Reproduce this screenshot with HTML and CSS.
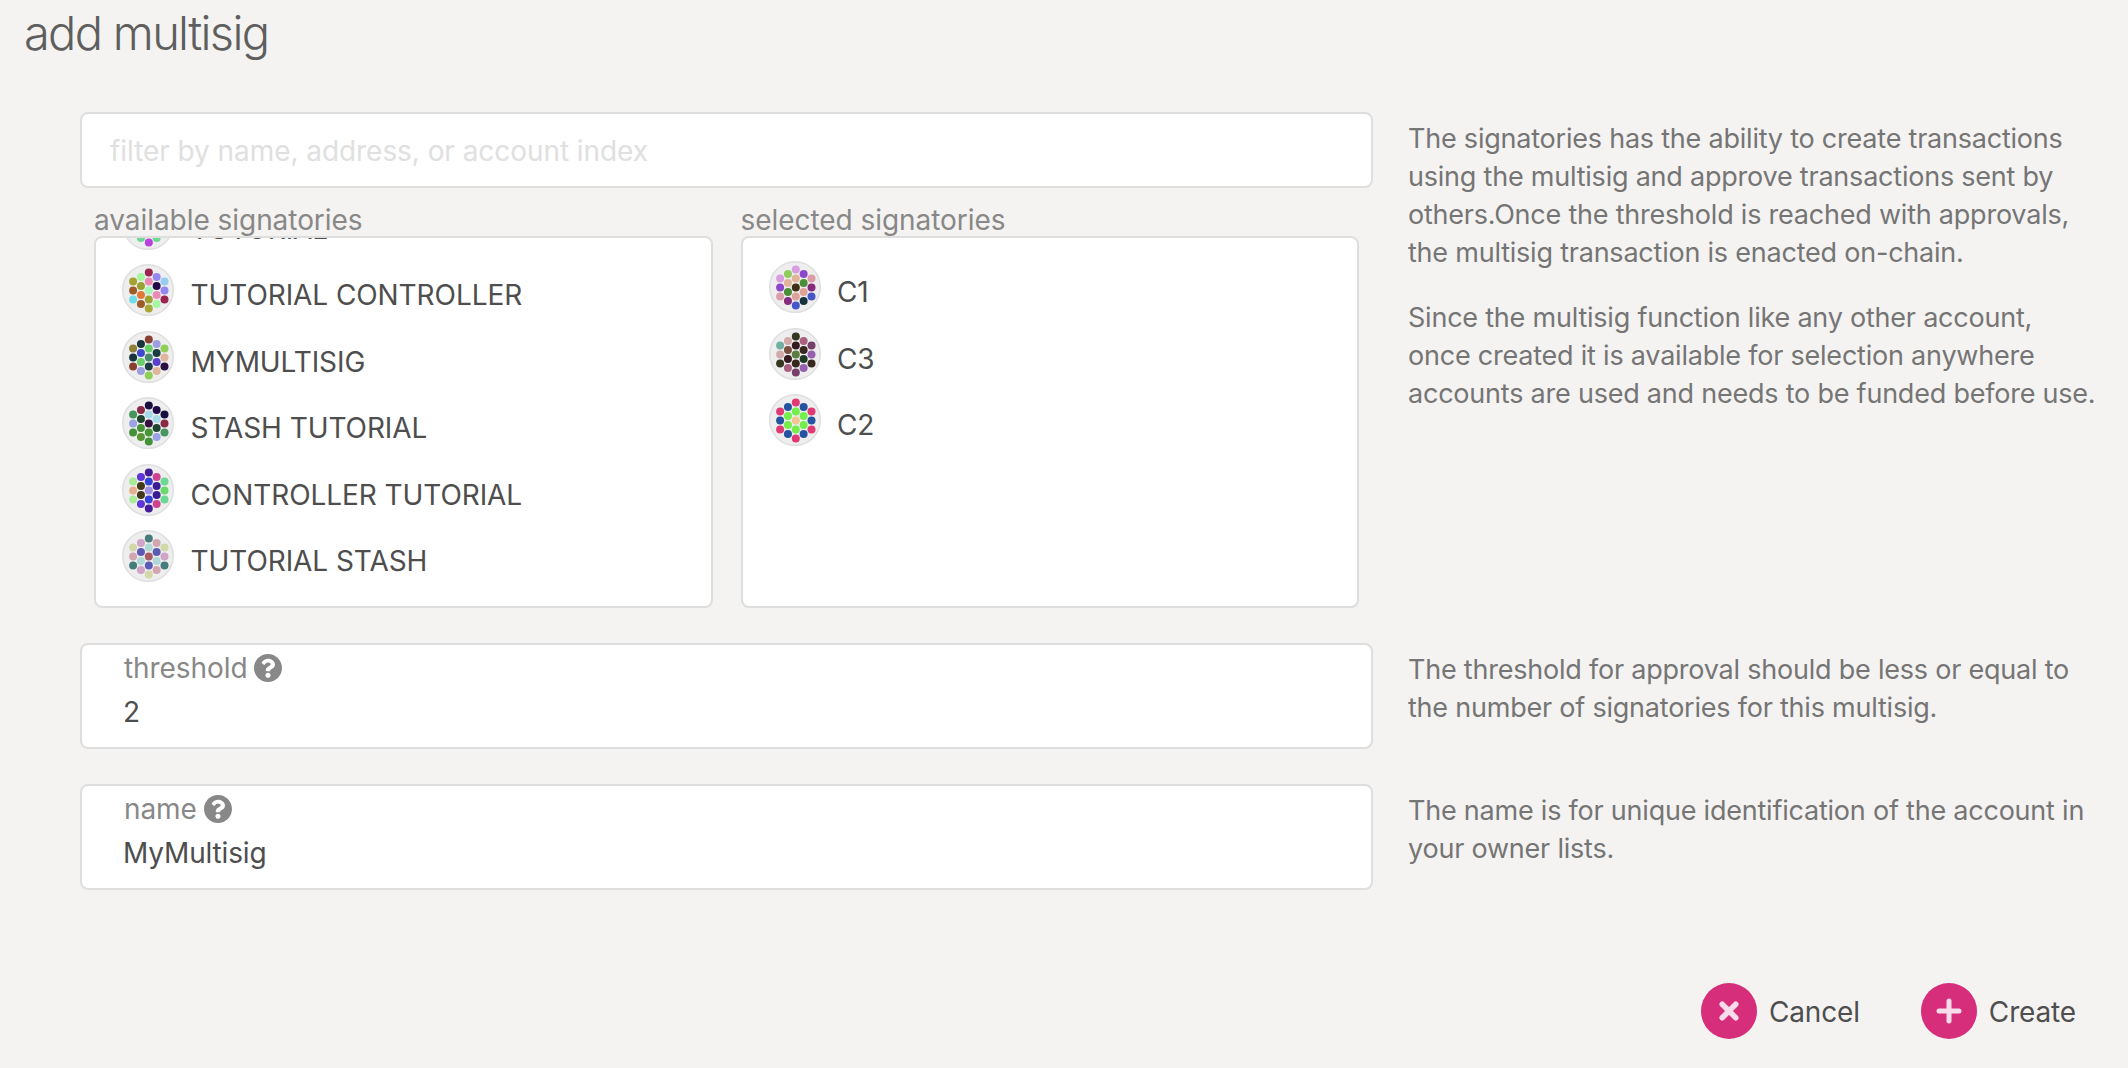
FILE: index.html
```html
<!DOCTYPE html>
<html lang="en">
<head>
<meta charset="utf-8">
<title>add multisig</title>
<link rel="stylesheet" href="styles.css">
</head>
<body>
<main class="modal">
  <h1 class="title">add multisig</h1>
  <section class="row">
    <div class="fields">
      <div class="filter">filter by name, address, or account index</div>
      <div class="lists">
        <div class="column">
          <div class="label">available signatories</div>
          <div class="list list-scrolled">
            <div class="account"><svg class="identicon" data-colors="6bd995 e6b090 6bd995 a9eb9b 3442d8 cf428f 6bd995 b940dc 5f35d8 a9eb9b 3442d8 b940dc a9eb9b 3442d8 cf428f 6bd995 6bd995 e6b090 6bd995"></svg><span>TUTORIAL</span></div>
            <div class="account"><svg class="identicon" data-colors="a5a233 a05c28 6fdcea a4f79f 98a233 e37838 a05c28 9c2450 ea8bb5 a4f6b8 9ea233 a9a63a 9488f0 230847 ea8bb5 a4f79f 96ccf2 9488f0 9c2450"></svg><span>TUTORIAL CONTROLLER</span></div>
            <div class="account"><svg class="identicon" data-colors="8f8138 18343c 8a4030 18343c 4148d0 68cf6b 9d9fe0 8a4030 68cf6b 468c6a 1b3c40 8fcf58 9d9fe0 1b3c40 5a40cc e0b59d 8fcf58 e0b59d 2a1040"></svg><span>MYMULTISIG</span></div>
            <div class="account"><svg class="identicon" data-colors="46965f 9aa3e6 45913a 8a2a46 1d4530 45913a 5a9634 190e40 a5dbe9 36103f 479535 45913a 1e0b48 a5dbe9 1d4530 9aa3e6 190e40 8a2a46 46965f"></svg><span>STASH TUTORIAL</span></div>
            <div class="account"><svg class="identicon" data-colors="a9eb9b e6b090 a9eb9b 5f35d8 44381a 44381a 5f35d8 461b96 3442d8 9d90e6 3442d8 461b96 cf428f 3b1b96 3b1b96 cf428f 6bd995 69da69 6bd995"></svg><span>CONTROLLER TUTORIAL</span></div>
            <div class="account"><svg class="identicon" data-colors="d2d8aa d2a6b0 467c7b d0a5c8 5d5ab5 b0d8d6 d0a5c8 467c7b b0d8d6 a95c63 5d5ab5 d2d8aa d2a6b0 5d5ab5 b0d8d6 d2a6b0 d2d8aa d0a5c8 467c7b"></svg><span>TUTORIAL STASH</span></div>
          </div>
        </div>
        <div class="column">
          <div class="label">selected signatories</div>
          <div class="list">
            <div class="account"><svg class="identicon" data-colors="d99ee0 8c46cc dc9caa 90cc5c e0b59a 4c8e38 872c7c d99ee0 e0b59a 402e16 dfa298 4658c8 8c46cc 4c8e38 dfa298 18323c dc9caa 872c7c 4658c8"></svg><span>C1</span></div>
            <div class="account"><svg class="identicon" data-colors="72b0a4 d2aaaa 33381e d2aaaa 7a5040 341b1e a9617f 33381e 341b1e 5b7f42 38271c 774068 a9617f 38271c 1f3828 9561ae 774068 9561ae 38271c"></svg><span>C3</span></div>
            <div class="account"><svg class="identicon" data-colors="de3a74 2454a0 de3a74 2454a0 74ee4c 74ee4c 2454a0 de3a74 74ee4c f2c694 74ee4c de3a74 2454a0 74ee4c 74ee4c 2454a0 de3a74 2454a0 de3a74"></svg><span>C2</span></div>
          </div>
        </div>
      </div>
    </div>
    <div class="help">
      <p>The signatories has the ability to create transactions<br>using the multisig and approve transactions sent by<br>others.Once the threshold is reached with approvals,<br>the multisig transaction is enacted on-chain.</p>
      <p>Since the multisig function like any other account,<br>once created it is available for selection anywhere<br>accounts are used and needs to be funded before use.</p>
    </div>
  </section>
  <section class="row">
    <div class="input">
      <div class="input-label">threshold<svg class="hint" viewBox="8 8 496 496"><path d="M504 256c0 137-111 248-248 248S8 393 8 256 119 8 256 8s248 111 248 248zM262.700 90c-54.500 0-89.300 23-116.500 63.800-3.500 5.300-2.400 12.400 2.700 16.300l34.700 26.300c5.200 3.900 12.600 3 16.700-2.100 17.900-22.700 30.100-35.800 57.300-35.800 20.400 0 45.700 13.100 45.700 33 0 15-12.400 22.700-32.500 34C247.100 238.500 216 254.900 216 296v4c0 6.600 5.400 12 12 12h56c6.600 0 12-5.400 12-12v-1.300c0-28.500 83.200-29.600 83.200-106.700 0-58-60.200-102-116.500-102zM256 338c-25.400 0-46 20.600-46 46s20.600 46 46 46 46-20.600 46-46-20.600-46-46-46z"/></svg></div>
      <div class="input-value">2</div>
    </div>
    <div class="help help-short">
      <p>The threshold for approval should be less or equal to<br>the number of signatories for this multisig.</p>
    </div>
  </section>
  <section class="row">
    <div class="input">
      <div class="input-label">name<svg class="hint" viewBox="8 8 496 496"><path d="M504 256c0 137-111 248-248 248S8 393 8 256 119 8 256 8s248 111 248 248zM262.700 90c-54.500 0-89.300 23-116.500 63.800-3.500 5.300-2.400 12.400 2.700 16.300l34.700 26.300c5.200 3.900 12.600 3 16.700-2.100 17.900-22.700 30.100-35.800 57.300-35.800 20.400 0 45.700 13.100 45.700 33 0 15-12.400 22.700-32.500 34C247.100 238.500 216 254.900 216 296v4c0 6.600 5.400 12 12 12h56c6.600 0 12-5.400 12-12v-1.300c0-28.500 83.200-29.600 83.200-106.700 0-58-60.200-102-116.500-102zM256 338c-25.400 0-46 20.600-46 46s20.600 46 46 46 46-20.600 46-46-20.600-46-46-46z"/></svg></div>
      <div class="input-value">MyMultisig</div>
    </div>
    <div class="help help-short">
      <p>The name is for unique identification of the account in<br>your owner lists.</p>
    </div>
  </section>
  <footer class="actions">
    <button class="action"><svg class="badge" viewBox="0 0 56 56"><circle cx="28" cy="28" r="28"/><path class="cross" d="M21.200 21.200l13.600 13.600M34.800 21.200L21.200 34.800"/></svg><span>Cancel</span></button>
    <button class="action"><svg class="badge" viewBox="0 0 56 56"><circle cx="28" cy="28" r="28"/><path class="plus" d="M28 18v20M18 28h20"/></svg><span>Create</span></button>
  </footer>
</main>
<script src="script.js"></script>
</body>
</html>
```
FILE: styles.css
```css
* { box-sizing: border-box; }

body {
  margin: 0;
  background: #f4f3f1;
  color: #4e4e4e;
  font-family: Inter, "Liberation Sans", sans-serif;
  font-size: 28px;
  line-height: 38px;
}

.modal {
  height: 1068px;
  overflow: hidden;
  padding: 3px 34px 0 80px;
}

.title {
  margin: 0 0 49px -56px;
  font-size: 47px;
  line-height: 60px;
  font-weight: 300;
  letter-spacing: -1.700px;
  color: #5e5e5e;
}

.row {
  display: grid;
  grid-template-columns: 1293px 1fr;
  column-gap: 35px;
  margin-bottom: 35px;
}

.filter,
.input,
.list {
  background: #fff;
  border: 2px solid #dededf;
  border-radius: 8px;
}

.filter {
  height: 76px;
  padding: 18px 28px;
  letter-spacing: -0.060px;
  color: #e0e0e0;
}

.lists {
  display: flex;
  gap: 28px;
  padding: 13px 14px 0;
}

.column { flex: 1; }

.label {
  height: 35px;
  letter-spacing: -0.050px;
  color: #888;
}

.list {
  height: 372px;
  overflow: hidden;
  padding: 16px 26px;
}

.list-scrolled {
  display: flex;
  flex-direction: column;
  justify-content: flex-end;
  padding-bottom: 16.500px;
}

.account {
  display: flex;
  flex: none;
  align-items: center;
  gap: 16.500px;
  height: 66.500px;
  letter-spacing: -0.080px;
}

.account span { padding-top: 10px; }

.identicon {
  width: 52px;
  height: 52px;
}

.help {
  font-size: 27px;
  letter-spacing: -0.220px;
  color: #757575;
  white-space: nowrap;
}

.help p { margin: 8px 0 27px; }
.help p:last-child { margin-bottom: 0; }
.help-short { line-height: 37.500px; }

.input {
  height: 106px;
  padding: 4px 42px;
}

.input-label {
  display: flex;
  align-items: center;
  gap: 7px;
  letter-spacing: -0.080px;
  color: #888;
}

.hint {
  width: 28px;
  height: 28px;
  fill: #888;
}

.input-value {
  margin: 6px 0 0 -1px;
  letter-spacing: -0.150px;
}

.actions {
  display: flex;
  justify-content: flex-end;
  gap: 61px;
  margin-top: 93px;
  padding-right: 18px;
}

.action {
  display: flex;
  align-items: center;
  gap: 12px;
  padding: 0;
  border: 0;
  background: none;
  color: inherit;
  font: inherit;
  letter-spacing: -0.150px;
}

.action span { padding-top: 2px; }

.badge {
  width: 56px;
  height: 56px;
  fill: #d62e7a;
  stroke-linecap: round;
}

.cross { stroke: #f9dcea; stroke-width: 5.500; }
.plus { stroke: #f9dcea; stroke-width: 5; }
```
FILE: script.js
```js
// Identicon: 19 dots in five hexagonally packed columns.
const COLUMNS = [[-15.7, 3], [-7.85, 4], [0, 5], [7.85, 4], [15.7, 3]];

document.querySelectorAll('.identicon').forEach((svg) => {
  const colors = svg.dataset.colors.split(' ');
  let dots = '<circle cx="26" cy="26" r="25.3" fill="#eee" stroke="#dedede" stroke-width="1.4"/>';
  let i = 0;
  COLUMNS.forEach(([x, count]) => {
    for (let n = 0; n < count; n++) {
      const y = (n - (count - 1) / 2) * 9;
      dots += `<circle cx="${26.8 + x}" cy="${26.6 + y}" r="4" fill="#${colors[i++]}"/>`;
    }
  });
  svg.setAttribute('viewBox', '0 0 52 52');
  svg.innerHTML = dots;
});
```
